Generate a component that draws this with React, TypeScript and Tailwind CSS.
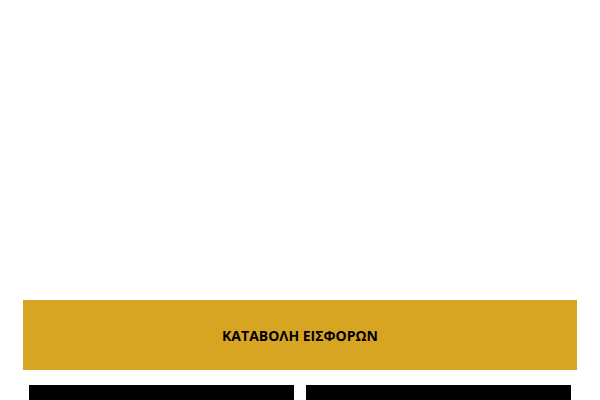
import React from "react";

export default function App() {
  return (
    <div className="min-h-screen bg-white" style={{ fontFamily: '"Open Sans", "Liberation Sans", sans-serif' }}>
      <div className="h-[300px]" />
      <div className="px-[23px]">
        <div className="h-[70px] bg-[#d8a523] flex items-center justify-center">
          <h2 className="text-[14px] font-bold text-black tracking-[0px]">ΚΑΤΑΒΟΛΗ ΕΙΣΦΟΡΩΝ</h2>
        </div>
        <div className="grid grid-cols-2 gap-[12px] px-[6px] mt-[15px]">
          <div className="h-[120px] bg-black" />
          <div className="h-[120px] bg-black" />
        </div>
      </div>
    </div>
  );
}
